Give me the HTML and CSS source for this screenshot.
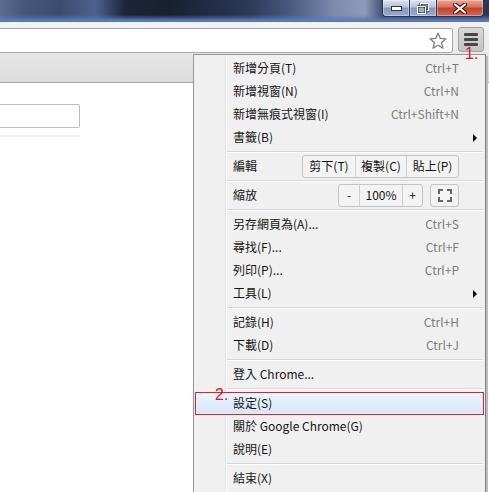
FILE: index.html
```html
<!DOCTYPE html>
<html>
<head>
<meta charset="utf-8">
<link rel="stylesheet" href="styles.css">
</head>
<body>
<div class="titlebar">
  <div class="winbtns">
    <div class="wb min"><svg width="11" height="5" viewBox="0 0 11 5"><rect x="0.5" y="0.5" width="10" height="4" fill="#fff" stroke="#2c3548"/></svg></div>
    <div class="wb max"><svg width="12" height="11" viewBox="0 0 12 11"><rect x="3.5" y="0.5" width="8" height="7" fill="none" stroke="#2c3548" stroke-width="2.2"/><rect x="3.5" y="0.5" width="8" height="7" fill="none" stroke="#fff" stroke-width="1"/><rect x="0.5" y="3.5" width="8" height="7" fill="#9fb0cc" stroke="#2c3548" stroke-width="2.2"/><rect x="0.5" y="3.5" width="8" height="7" fill="none" stroke="#fff" stroke-width="1"/></svg></div>
    <div class="wb close"><svg width="14" height="11" viewBox="0 0 14 11"><path d="M2 1.5 L12 9.5 M12 1.5 L2 9.5" stroke="#4a1208" stroke-width="4.2" stroke-linecap="round"/><path d="M2 1.5 L12 9.5 M12 1.5 L2 9.5" stroke="#fff" stroke-width="2.2" stroke-linecap="round"/></svg></div>
  </div>
</div>
<div class="toolbar">
  <div class="omnibox">
    <svg class="star" width="18" height="18" viewBox="0 0 18 18"><polygon points="9,1.2 11.3,6.4 16.8,6.9 12.6,10.6 13.9,16.3 9,13.3 4.1,16.3 5.4,10.6 1.2,6.9 6.7,6.4" fill="#fff" stroke="#7c7c7c" stroke-width="1.3" stroke-linejoin="round"/></svg>
  </div>
  <div class="menubtn"><i></i><i></i><i></i></div>
</div>
<div class="pagehead"></div>
<div class="content">
  <div class="field"></div>
  <div class="fieldline"></div>
</div>

<div class="menu">
  <div class="row"><span class="label">新增分頁(T)</span><span class="key">Ctrl+T</span></div>
  <div class="row"><span class="label">新增視窗(N)</span><span class="key">Ctrl+N</span></div>
  <div class="row"><span class="label">新增無痕式視窗(I)</span><span class="key">Ctrl+Shift+N</span></div>
  <div class="row"><span class="label">書籤(B)</span><span class="arrow"></span></div>
  <div class="sep"></div>
  <div class="row"><span class="label">編輯</span>
    <div class="group">
      <span class="btn w53">剪下(T)</span><span class="btn w51">複製(C)</span><span class="btn w51 last">貼上(P)</span>
    </div>
  </div>
  <div class="sep"></div>
  <div class="row"><span class="label">縮放</span>
    <div class="group">
      <span class="btn w21">-</span><span class="btn w43">100%</span><span class="btn w20 last">+</span>
    </div>
    <div class="group fs"><svg width="14" height="13" viewBox="0 0 14 13"><path d="M1 5 V1 H5 M9 1 H13 V5 M13 8 V12 H9 M5 12 H1 V8" fill="none" stroke="#666" stroke-width="2"/></svg></div>
  </div>
  <div class="sep"></div>
  <div class="row"><span class="label">另存網頁為(A)...</span><span class="key">Ctrl+S</span></div>
  <div class="row"><span class="label">尋找(F)...</span><span class="key">Ctrl+F</span></div>
  <div class="row"><span class="label">列印(P)...</span><span class="key">Ctrl+P</span></div>
  <div class="row"><span class="label">工具(L)</span><span class="arrow"></span></div>
  <div class="sep"></div>
  <div class="row"><span class="label">記錄(H)</span><span class="key">Ctrl+H</span></div>
  <div class="row"><span class="label">下載(D)</span><span class="key">Ctrl+J</span></div>
  <div class="sep"></div>
  <div class="row"><span class="label">登入 Chrome...</span></div>
  <div class="sep"></div>
  <div class="row hot"><span class="label">設定(S)</span></div>
  <div class="row"><span class="label">關於 Google Chrome(G)</span></div>
  <div class="row"><span class="label">說明(E)</span></div>
  <div class="sep"></div>
  <div class="row"><span class="label">結束(X)</span></div>
</div>

<span class="note n1">1.</span>
<span class="note n2">2.</span>
</body>
</html>
```

FILE: styles.css
```css
html, body {
  margin: 0;
  padding: 0;
}
body {
  width: 489px;
  height: 492px;
  overflow: hidden;
  position: relative;
  background: #fff;
  font-family: "Noto Sans CJK TC", "Noto Sans", sans-serif;
  font-size: 12px;
  color: #141414;
}

/* ---------- title bar ---------- */
.titlebar {
  height: 22px;
  display: flex;
  justify-content: flex-end;
  align-items: flex-start;
  padding-right: 5px;
  box-sizing: border-box;
  background:
    linear-gradient(to bottom, rgba(80,110,170,0) 0, rgba(80,110,170,0) 15px, rgba(88,120,184,0.75) 19px, #5f82c2 21px, #4a6aa6 22px),
    linear-gradient(to right, #5c6c8e 0, #45567a 25px, #3c4c70 60px, #4d628d 95px, #1d2639 125px, #18202f 170px, #222e47 215px, #2c3a58 250px, #485a80 290px, #7e8cac 335px, #8d9bb9 365px, #3a4766 385px, #2c3852 489px);
}
.winbtns {
  display: flex;
}
.wb {
  height: 16px;
  border: 1px solid #263550;
  border-top: none;
  display: flex;
  align-items: center;
  justify-content: center;
  box-shadow: inset 0 0 0 1px rgba(255,255,255,0.35);
  background: linear-gradient(to bottom, #dde4f0 0, #b4c1d8 45%, #8797b8 50%, #9aabca 100%);
}
.wb.min { width: 26px; border-radius: 0 0 0 4px; border-right: none; }
.wb.max { width: 26px; border-right: none; }
.wb.close {
  width: 46px;
  border-radius: 0 0 4px 0;
  background: linear-gradient(to bottom, #eaa796 0, #d9705a 45%, #c2432c 50%, #d6674e 100%);
}

/* ---------- toolbar ---------- */
.toolbar {
  height: 31px;
  display: flex;
  align-items: flex-start;
  background: linear-gradient(to bottom, #f2f2f2, #eaeaea);
}
.omnibox {
  margin-top: 6px;
  width: 453px;
  height: 25px;
  box-sizing: border-box;
  background: #fff;
  border: 1px solid #a9a9a9;
  border-left: none;
  border-radius: 0 3px 3px 0;
  display: flex;
  justify-content: flex-end;
  align-items: center;
  padding-right: 5px;
}
.star { display: block; }
.menubtn {
  margin-top: 5px;
  margin-left: 5px;
  width: 26px;
  height: 25px;
  box-sizing: border-box;
  border: 1px solid #a2a2a2;
  border-radius: 3px;
  background: linear-gradient(to bottom, #d9d9d9, #c3c3c3);
  display: flex;
  flex-direction: column;
  align-items: center;
  justify-content: center;
  gap: 2px;
}
.menubtn i {
  display: block;
  width: 14px;
  height: 3px;
  border-radius: 1px;
  background: #474747;
}

/* ---------- page ---------- */
.pagehead {
  height: 29px;
  border-bottom: 1px solid #a8a8a8;
  background: linear-gradient(to bottom, #e6e6e6, #dcdcdc);
}
.content {
  padding-top: 21px;
}
.field {
  width: 80px;
  height: 24px;
  box-sizing: border-box;
  border: 1px solid #bdbdbd;
  border-left: none;
  border-radius: 0 2px 2px 0;
  background: #fff;
}
.fieldline {
  margin-top: 7px;
  width: 80px;
  height: 2px;
  background: #eeeeee;
}

/* ---------- menu ---------- */
.menu {
  position: absolute;
  left: 193px;
  top: 54px;
  width: 291px;
  height: 460px;
  border: 1px solid #979797;
  border-right-color: #7f7f7f;
  padding-top: 2px;
  box-shadow: 2px 2px 0 #bdbdbd;
  background:
    linear-gradient(to right, transparent 31px, #e2e3e3 31px, #e2e3e3 32px, #ffffff 32px, #ffffff 33px, transparent 33px),
    #f0f0f0;
}
.row {
  height: 23px;
  line-height: 16px;
  box-sizing: border-box;
  margin: 0 1px;
  border: 1px solid transparent;
  border-radius: 2px;
  padding: 0 24px 2px 37px;
  display: flex;
  align-items: center;
  white-space: nowrap;
}
.label { flex: 1; }
.key { color: #7d7d7d; }
.arrow {
  width: 0;
  height: 0;
  border-left: 4px solid #000;
  border-top: 4px solid transparent;
  border-bottom: 4px solid transparent;
  margin-right: -18px;
  margin-top: 2px;
}
.sep {
  height: 1px;
  margin: 2px 2px 2px 33px;
  background: #d7d7d7;
  border-bottom: 1px solid #ffffff;
}
.group {
  display: flex;
  height: 23px;
  box-sizing: border-box;
  border: 1px solid #c4c4c4;
  border-radius: 3px;
  background: #f3f3f3;
  margin-bottom: -2px;
}
.btn {
  display: flex;
  align-items: center;
  justify-content: center;
  border-right: 1px solid #cfcfcf;
  box-sizing: border-box;
  padding-bottom: 2px;
}
.btn.last { border-right: none; }
.w53 { width: 53px; }
.w51 { width: 51px; }
.w21 { width: 21px; }
.w43 { width: 43px; }
.w20 { width: 19px; }
.group.fs {
  width: 29px;
  margin-left: 7px;
  align-items: center;
  justify-content: center;
}
.group.fs svg { display: block; }

.row.hot {
  border-color: #e2202a;
  border-radius: 0;
  box-shadow: inset 0 0 0 1px #e4eefb;
  background: linear-gradient(to bottom, #eef5fd, #d6e6f9);
}

/* ---------- annotations ---------- */
.note {
  position: absolute;
  font-family: "Liberation Sans", sans-serif;
  font-size: 16px;
  line-height: 16px;
  color: #e3141c;
}
.n1 { left: 465px; top: 46px; }
.n2 { left: 215px; top: 387px; }
```
